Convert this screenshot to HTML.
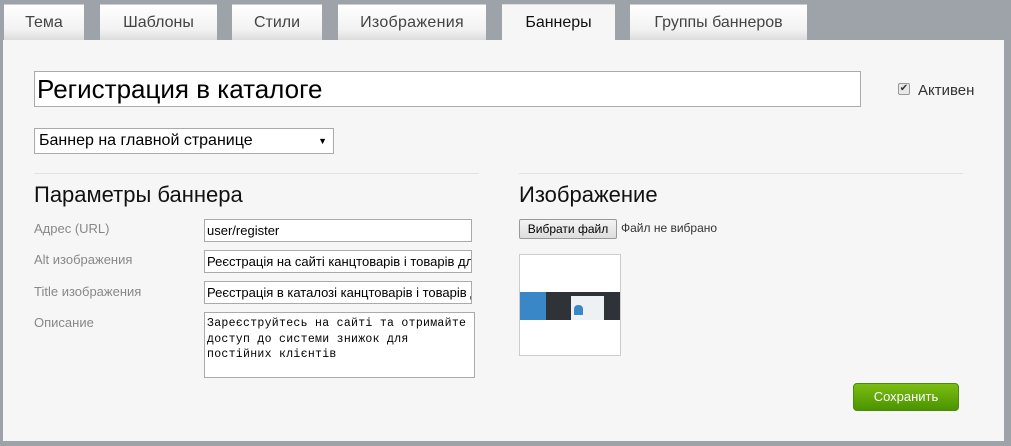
<!DOCTYPE html>
<html><head><meta charset="utf-8"><style>
*{box-sizing:border-box;margin:0;padding:0}
body{width:1011px;height:446px;overflow:hidden;background:#9ea2a9;font-family:"Liberation Sans",Arial,sans-serif;position:relative}
.a{position:absolute}
.tab{position:absolute;top:4px;height:36px;background:linear-gradient(#fff,#f2f2f2 70%,#dcdcdc);font-size:16px;color:#444;text-align:center;line-height:36px;border-top:1px solid #ccc}
.panel{position:absolute;left:3px;top:40px;width:1001px;height:401px;background:#f6f6f6}
.lbl{position:absolute;left:34px;font-size:13px;color:#888}
.inp{position:absolute;left:204px;width:268px;height:23px;background:#fff;border:1px solid #aaa;font-size:13px;line-height:21px;padding-left:2px;white-space:nowrap;overflow:hidden;color:#000}
</style></head><body>
<div class="tab" style="left:4px;width:80px">Тема</div>
<div class="tab" style="left:100px;width:117px">Шаблоны</div>
<div class="tab" style="left:232px;width:90px">Стили</div>
<div class="tab" style="left:338px;width:148px;letter-spacing:0.3px">Изображения</div>
<div class="tab" style="left:502px;width:113px;background:#f6f6f6;color:#111;height:37px;border-top:1px solid #ddd">Баннеры</div>
<div class="tab" style="left:630px;width:177px">Группы баннеров</div>
<div class="panel"></div>
<div class="a" style="left:34px;top:71px;width:827px;height:36px;background:#fff;border:1px solid #aaa;font-size:26px;line-height:34px;padding-left:2px;color:#000">Регистрация в каталоге</div>
<div class="a" style="left:898px;top:83px;width:12px;height:12px;border:1px solid #999;border-radius:2px;background:#e8e8e8;font-size:10px;line-height:10px;text-align:center;color:#333">✔</div>
<div class="a" style="left:918px;top:82px;font-size:15px;color:#333">Активен</div>
<div class="a" style="left:34px;top:128px;width:300px;height:26px;background:#fff;border:1px solid #aaa;font-size:16px;line-height:24px;padding-left:4px;color:#000">Баннер на главной странице<span style="position:absolute;right:6px;font-size:9px">▼</span></div>
<div class="a" style="left:34px;top:173px;width:445px;height:1px;background:#e2e2e2"></div>
<div class="a" style="left:519px;top:173px;width:444px;height:1px;background:#e2e2e2"></div>
<div class="a" style="left:34px;top:182px;font-size:22px;color:#111">Параметры баннера</div>
<div class="a" style="left:519px;top:182px;font-size:22px;color:#111">Изображение</div>
<div class="lbl" style="top:221px">Адрес (URL)</div>
<div class="lbl" style="top:252px">Alt изображения</div>
<div class="lbl" style="top:284px">Title изображения</div>
<div class="lbl" style="top:315px">Описание</div>
<div class="inp" style="top:219px">user/register</div>
<div class="inp" style="top:250px">Реєстрація на сайті канцтоварів і товарів для</div>
<div class="inp" style="top:281px">Реєстрація в каталозі канцтоварів і товарів для</div>
<div class="inp" style="top:312px;width:271px;height:66px;font-family:'Liberation Mono',monospace;font-size:11.5px;line-height:15.5px;padding:3px 2px;white-space:normal;letter-spacing:0.3px">Зареєструйтесь на сайті та отримайте доступ до системи знижок для постійних клієнтів</div>
<div class="a" style="left:519px;top:219px;width:98px;height:20px;border:1px solid #999;border-radius:2px;background:linear-gradient(#f4f4f4,#ddd);font-size:12px;line-height:18px;text-align:center;color:#000">Вибрати файл</div>
<div class="a" style="left:621px;top:221px;font-size:12px;color:#333">Файл не вибрано</div>
<div class="a" style="left:519px;top:254px;width:102px;height:102px;background:#fff;border:1px solid #ccc">
<div class="a" style="left:0;top:37px;width:100px;height:28px;background:#2f3338"></div>
<div class="a" style="left:0;top:37px;width:26px;height:28px;background:#3a87c8"></div>
<div class="a" style="left:51px;top:41px;width:33px;height:24px;background:#eef1f4"></div>
<div class="a" style="left:54px;top:50px;width:9px;height:10px;background:#3a87c8;border-radius:4px 4px 0 0"></div>
</div>
<div class="a" style="left:853px;top:383px;width:106px;height:28px;border-radius:4px;background:linear-gradient(#7bbd12,#4a9400);border:1px solid #4a8a10;color:#fff;font-size:13px;line-height:26px;text-align:center">Сохранить</div>
</body></html>
